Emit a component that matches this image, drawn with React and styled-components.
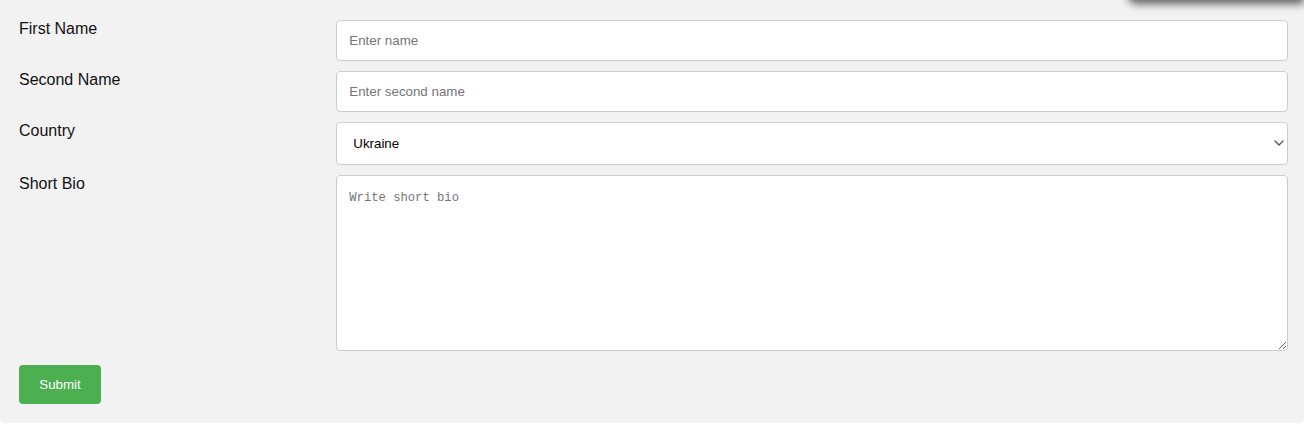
import React from 'react'
import styled, { createGlobalStyle } from 'styled-components'
import { ChevronDown } from 'lucide-react'

const Global = createGlobalStyle`
  html, body {
    margin: 0;
    padding: 0;
    background: #fff;
    font-family: "Liberation Sans", Arial, sans-serif;
  }
  * { box-sizing: border-box; }
`

const Container = styled.div`
  position: relative;
  background-color: #f2f2f2;
  border-radius: 0 0 5px 5px;
  padding: 20px 16px 20px 19px;
  height: 423px;
`

const Shade = styled.div`
  position: absolute;
  top: -40px;
  right: 0;
  width: 176px;
  height: 40px;
  border-radius: 0 0 0 8px;
  background: #f2f2f2;
  box-shadow: 0 4px 8px rgba(0, 0, 0, 0.6);
`

const Form = styled.form`
  display: grid;
  grid-template-columns: 25% 75%;
  row-gap: 10px;
`

const Label = styled.label`
  align-self: start;
  font-size: 16px;
  line-height: 18px;
  color: #111;
`

const fieldBase = `
  width: 100%;
  padding: 12px;
  border: 1px solid #ccc;
  border-radius: 4px;
  background: #fff;
  color: #000;
  font-family: "Liberation Sans", Arial, sans-serif;
  font-size: 13.33px;
  outline: none;
  &::placeholder { color: #757575; }
`

const Input = styled.input`
  ${fieldBase}
  height: 41px;
`

const SelectWrap = styled.div`
  position: relative;
`

const Select = styled.select`
  ${fieldBase}
  appearance: none;
  -webkit-appearance: none;
  height: 43px;
  padding: 0 24px 0 16px;
`

const Arrow = styled(ChevronDown)`
  position: absolute;
  right: 1px;
  top: 13px;
  pointer-events: none;
  color: #555;
`

const TextArea = styled.textarea`
  ${fieldBase}
  height: 176px;
  resize: vertical;
  display: block;
  font-family: "Liberation Mono", monospace;
  font-size: 12.2px;
  line-height: 15px;
  padding: 15px 12px;
`

const Actions = styled.div`
  grid-column: 1 / -1;
  margin-top: 4px;
`

const Submit = styled.button`
  background-color: #4caf50;
  color: #fff;
  border: none;
  border-radius: 4px;
  padding: 12px 20px;
  width: 82px;
  height: 39px;
  font-family: "Liberation Sans", Arial, sans-serif;
  font-size: 13.33px;
  cursor: pointer;
`

export default function App() {
  return (
    <>
      <Global />
      <Container>
        <Shade />
        <Form onSubmit={(e) => e.preventDefault()}>
          <Label htmlFor="fname">First Name</Label>
          <Input id="fname" type="text" placeholder="Enter name" />

          <Label htmlFor="sname">Second Name</Label>
          <Input id="sname" type="text" placeholder="Enter second name" />

          <Label htmlFor="country">Country</Label>
          <SelectWrap>
            <Select id="country" defaultValue="ukraine">
              <option value="ukraine">Ukraine</option>
              <option value="poland">Poland</option>
              <option value="usa">USA</option>
            </Select>
            <Arrow size={16} strokeWidth={2} />
          </SelectWrap>

          <Label htmlFor="bio">Short Bio</Label>
          <TextArea id="bio" placeholder="Write short bio" />

          <Actions>
            <Submit type="submit">Submit</Submit>
          </Actions>
        </Form>
      </Container>
    </>
  )
}
